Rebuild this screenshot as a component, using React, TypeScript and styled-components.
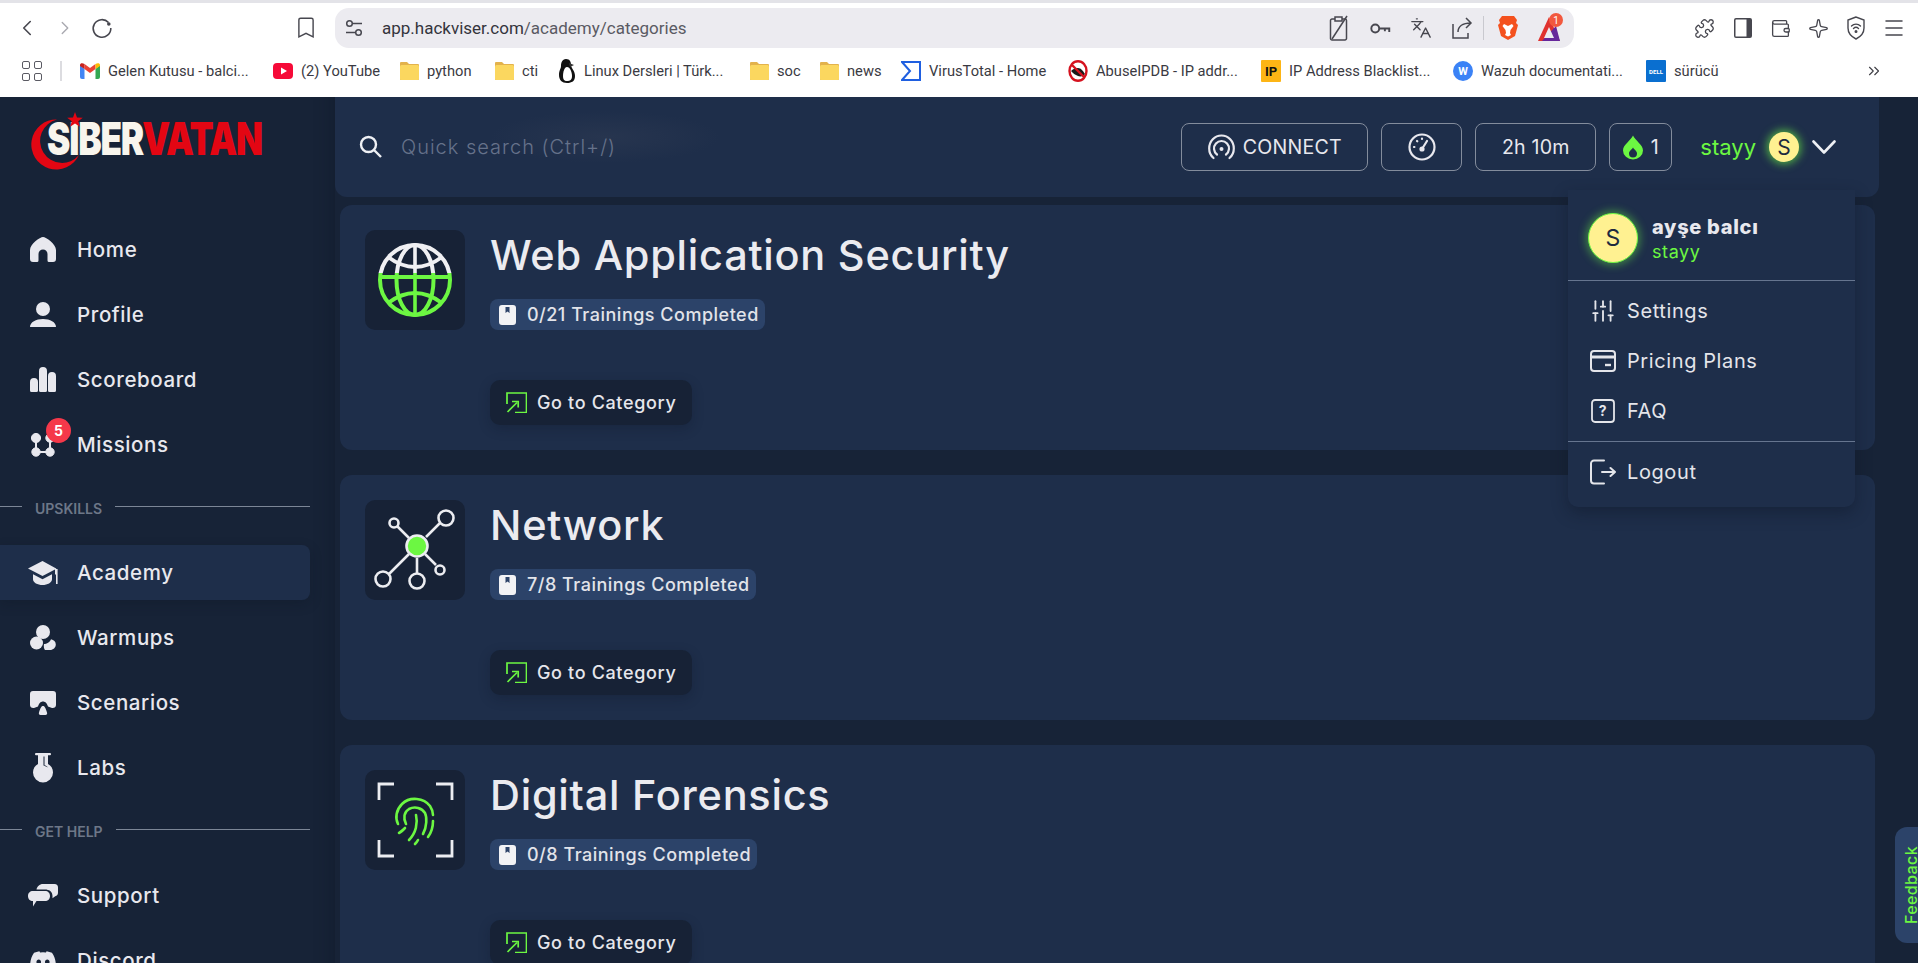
import React from "react";
import styled, { createGlobalStyle } from "styled-components";
import { ChevronLeft, ChevronRight, ChevronsRight, Languages, Menu, Puzzle, Sparkle, SlidersVertical, Wallet } from "lucide-react";
import { FaDiscord } from "react-icons/fa";

const GREEN = "#6cf742";
const UI_FONT = `"Inter", "Noto Sans", sans-serif`;
const CHROME_FONT = `"Roboto", "Noto Sans", sans-serif`;

const GlobalStyle = createGlobalStyle`
  html, body {
    margin: 0;
    height: 100%;
    overflow: hidden;
    background: #172337;
  }
  * { box-sizing: border-box; }
`;

const Page = styled.div`
  width: 1918px;
  height: 963px;
  position: relative;
  overflow: hidden;
  display: flex;
  flex-direction: column;
  font-family: ${UI_FONT};
`;

/* browser chrome */
const Chrome = styled.div`
  height: 97px;
  flex: none;
  background: #fff;
  border-top: 3px solid #e3e3e8;
  color: #3f3f46;
  font-family: ${CHROME_FONT};
`;

const Toolbar = styled.div`
  height: 50px;
  padding: 5px 13px 5px 0;
  display: flex;
  align-items: center;
`;

const ToolButton = styled.div<{ $w: number; $faded?: boolean }>`
  width: ${(p) => p.$w}px;
  flex: none;
  display: flex;
  justify-content: center;
  align-items: center;
  color: ${(p) => (p.$faded ? "#a9a9b0" : "#47474f")};
`;

const PageBookmark = styled(ToolButton)`
  margin: 0 14px 0 163px;
`;

const AddressBar = styled.div`
  width: 1239px;
  height: 40px;
  margin-right: 110px;
  flex: none;
  background: #ecebf0;
  border-radius: 14px;
  display: flex;
  align-items: center;
  padding-left: 10px;
  color: #47474f;
`;

const UrlText = styled.span`
  font-size: 17px;
  color: #34343c;
  margin-left: 19px;
  flex: 1;
`;

const UrlPath = styled.span`
  color: #5a5a63;
`;

const BarSeparator = styled.div`
  width: 1px;
  height: 24px;
  background: #c9c9cf;
  margin: 0 4px 0 1px;
`;

const Bookmarks = styled.div`
  height: 44px;
  display: flex;
  align-items: center;
  padding: 0 0 8px 22px;
`;

const AppsButton = styled.div`
  width: 20px;
  display: grid;
  grid-template-columns: 8px 8px;
  gap: 4px;
`;

const AppsCell = styled.div`
  width: 8px;
  height: 8px;
  border: 1.4px solid #5a5a63;
  border-radius: 2px;
`;

const BookmarkDivider = styled.div`
  width: 2px;
  height: 20px;
  background: #dcdce0;
  margin: 0 18px;
`;

const BookmarkItem = styled.div<{ $w: number }>`
  width: ${(p) => p.$w}px;
  flex: none;
  display: flex;
  align-items: center;
  gap: 8px;
  font-size: 14.7px;
  color: #3a3a42;
  white-space: nowrap;
`;

/* body */
const Body = styled.div`
  flex: 1;
  display: flex;
  min-height: 0;
`;

const Sidebar = styled.aside`
  width: 335px;
  flex: none;
  background: #172337;
  padding-right: 25px;
  box-shadow: inset -22px 0 20px -22px rgba(10, 16, 28, 0.35);
`;

const LogoBlock = styled.div`
  height: 125px;
  padding: 22px 0 0 30px;
  position: relative;
`;

const LogoText = styled.div`
  position: absolute;
  left: 47px;
  top: 15px;
  font-size: 45px;
  line-height: 54px;
  font-weight: 900;
  letter-spacing: -1.5px;
  white-space: nowrap;
  color: #f8f5ed;
  transform: scaleX(0.78);
  transform-origin: left center;
`;

const LogoRed = styled.span`
  color: #e30613;
`;

const LogoStar = styled.svg`
  position: absolute;
  left: 67px;
  top: 15px;
`;

const NavList = styled.nav`
  display: flex;
  flex-direction: column;
  gap: 10px;
`;

const NavItem = styled.div<{ $active?: boolean }>`
  height: 55px;
  display: flex;
  align-items: center;
  gap: 19px;
  padding-left: 28px;
  border-radius: 0 8px 8px 0;
  background: ${(p) => (p.$active ? "#1e2e4a" : "transparent")};
  box-shadow: ${(p) => (p.$active ? "0 4px 12px rgba(10,18,32,0.25)" : "none")};
  font-size: 20.5px;
  font-weight: 500;
  letter-spacing: 0.6px;
  color: #e8e8ee;
`;

const NavLabel = styled.span`
  margin-top: -1px;
`;

const NavIcon = styled.div`
  width: 30px;
  height: 30px;
  flex: none;
  display: flex;
  align-items: center;
  justify-content: center;
  position: relative;
  color: #e8e8ee;
`;

const CountBadge = styled.span`
  position: absolute;
  left: 18px;
  top: -12px;
  width: 25px;
  height: 25px;
  border-radius: 50%;
  background: #f5384a;
  color: #fff;
  font-size: 14px;
  font-weight: 700;
  letter-spacing: 0;
  display: flex;
  align-items: center;
  justify-content: center;
`;

const SectionLabel = styled.div`
  height: 53px;
  display: flex;
  align-items: center;
  gap: 13px;
  font-size: 14px;
  font-weight: 600;
  color: #6d7788;
`;

const SectionLine = styled.div<{ $short?: boolean }>`
  height: 1px;
  margin-top: -4px;
  background: #7c8696;
  ${(p) => (p.$short ? "width: 22px; flex: none;" : "flex: 1;")}
`;

const Main = styled.main`
  flex: 1;
  min-width: 0;
  padding-right: 39px;
`;

const Header = styled.header`
  height: 100px;
  display: flex;
  align-items: center;
  padding: 0 43px 0 22px;
  margin-bottom: 8px;
  border-radius: 0 0 12px 12px;
  background: radial-gradient(ellipse 115px 26px at 270px 40px, #27354f 0%, rgba(39, 53, 79, 0) 100%), #1e2e4a;
`;

const SearchBox = styled.div`
  flex: 1;
  display: flex;
  align-items: center;
  gap: 18px;
  padding-left: 2px;
  color: #eef0f4;
`;

const SearchHint = styled.span`
  font-size: 20px;
  font-weight: 300;
  letter-spacing: 1px;
  color: #66728a;
`;

const HeaderActions = styled.div`
  display: flex;
  align-items: center;
  gap: 13px;
`;

const OutlineButton = styled.div<{ $w: number }>`
  width: ${(p) => p.$w}px;
  height: 48px;
  display: flex;
  align-items: center;
  justify-content: center;
  gap: 8px;
  border: 1px solid #838c9c;
  border-radius: 8px;
  font-size: 19.6px;
  font-weight: 400;
  letter-spacing: 0.2px;
  color: #e8e8ee;
`;

const UserName = styled.span`
  margin-left: 15px;
  font-size: 22px;
  font-weight: 400;
  color: ${GREEN};
`;

const SmallAvatar = styled.div`
  width: 30px;
  height: 30px;
  border-radius: 50%;
  background: #fff191;
  box-shadow: 0 0 8px 2px rgba(108, 247, 66, 0.65);
  color: #1d2a3f;
  font-size: 21px;
  display: flex;
  align-items: center;
  justify-content: center;
`;

const CardList = styled.div`
  display: flex;
  flex-direction: column;
  gap: 25px;
  padding-left: 5px;
  margin-right: 4px;
`;

const Card = styled.section`
  height: 245px;
  flex: none;
  padding: 25px;
  display: flex;
  gap: 25px;
  border-radius: 12px;
  background: #1e2e4a;
`;

const IconBox = styled.div`
  width: 100px;
  height: 100px;
  flex: none;
  border-radius: 10px;
  background: #172236;
`;

const CardBody = styled.div`
  display: flex;
  flex-direction: column;
  align-items: flex-start;
`;

const CardTitle = styled.h2`
  margin: 0;
  height: 50px;
  font-size: 41.5px;
  line-height: 50px;
  font-weight: 500;
  letter-spacing: 0.75px;
  color: #ebebf0;
`;

const ProgressBadge = styled.div`
  height: 31px;
  margin-top: 19px;
  padding: 0 6px 0 9px;
  display: flex;
  align-items: center;
  gap: 11px;
  border-radius: 8px;
  background: #2c4369;
  font-size: 18px;
  font-weight: 500;
  letter-spacing: 0.5px;
  color: #e2e4ea;
`;

const CategoryButton = styled.div`
  height: 45px;
  width: 202px;
  margin-top: 50px;
  padding-left: 16px;
  display: flex;
  align-items: center;
  gap: 10px;
  border-radius: 10px;
  background: #172236;
  box-shadow: 0 4px 12px rgba(12, 20, 36, 0.25);
  font-size: 18px;
  font-weight: 500;
  letter-spacing: 0.65px;
  color: #e6e6ec;
`;

/* dropdown over the page */
const Dropdown = styled.div`
  position: absolute;
  left: 1568px;
  top: 190px;
  width: 287px;
  height: 317px;
  border-radius: 0 0 10px 10px;
  background: #1e2e4a;
  box-shadow: 0 6px 16px rgba(12, 20, 36, 0.4);
  color: #e8e8ee;
`;

const DropdownHead = styled.div`
  height: 91px;
  padding: 23px 0 0 20px;
  display: flex;
  gap: 14px;
  border-bottom: 1px solid #66758f;
`;

const BigAvatar = styled.div`
  width: 50px;
  height: 50px;
  flex: none;
  border-radius: 50%;
  background: #fff191;
  border: 1px solid ${GREEN};
  box-shadow: 0 0 9px 2px rgba(108, 247, 66, 0.45);
  color: #1d2a3f;
  font-size: 23px;
  display: flex;
  align-items: center;
  justify-content: center;
`;

const FullName = styled.div`
  font-size: 20px;
  line-height: 28px;
  font-weight: 800;
  letter-spacing: 0.7px;
  color: #e8e8ee;
`;

const Handle = styled.div`
  font-size: 18px;
  line-height: 22px;
  letter-spacing: 0.6px;
  color: ${GREEN};
`;

const DropdownGroup = styled.div<{ $last?: boolean }>`
  padding: 5px 0;
  ${(p) => (p.$last ? "" : "border-bottom: 1px solid #66758f;")}
`;

const DropdownRow = styled.div`
  height: 50px;
  padding-left: 22px;
  display: flex;
  align-items: center;
  gap: 11px;
  font-size: 20px;
  font-weight: 400;
  letter-spacing: 0.6px;
  color: #e4e5ea;
`;

const RowIcon = styled.div`
  width: 26px;
  flex: none;
  display: flex;
  align-items: center;
  justify-content: center;
`;

const FeedbackTab = styled.div`
  position: absolute;
  left: 1895px;
  top: 827px;
  width: 23px;
  height: 116px;
  padding-left: 8px;
  border-radius: 12px 0 0 12px;
  background: #2c4369;
  color: ${GREEN};
  font-size: 16px;
  line-height: 14px;
  font-weight: 500;
  letter-spacing: 0.4px;
  writing-mode: vertical-rl;
  display: flex;
  align-items: center;
  justify-content: center;
`;

const FeedbackLabel = styled.span`
  transform: rotate(180deg);
`;

/* drawn icons */
const HomeIcon = () => (
  <svg width="26" height="25" viewBox="0 0 26 25" fill="currentColor">
    <path d="M13 0C16 0 26 7 26 13V22a3 3 0 0 1-3 3H19a1.5 1.5 0 0 1-1.5-1.5V17a4.5 4.5 0 0 0-9 0V23.5A1.5 1.5 0 0 1 7 25H3a3 3 0 0 1-3-3V13C0 7 10 0 13 0Z" />
  </svg>
);

const ProfileIcon = () => (
  <svg width="26" height="25" viewBox="0 0 26 25" fill="currentColor">
    <circle cx="13" cy="7" r="7" />
    <path d="M0 25c0-5 6-8 13-8s13 3 13 8Z" />
  </svg>
);

const ScoreIcon = () => (
  <svg width="26" height="25" viewBox="0 0 26 25" fill="currentColor">
    <path d="M0 15a4 4 0 0 1 8 0v8.5a1.5 1.5 0 0 1-1.5 1.5h-5A1.5 1.5 0 0 1 0 23.5Z" />
    <path d="M9 4a4 4 0 0 1 8 0v19.5a1.5 1.5 0 0 1-1.5 1.5h-5A1.5 1.5 0 0 1 9 23.5Z" />
    <path d="M18 9a4 4 0 0 1 8 0v14.5a1.5 1.5 0 0 1-1.5 1.5h-5a1.5 1.5 0 0 1-1.5-1.5Z" />
  </svg>
);

const MissionIcon = () => (
  <svg width="24" height="24" viewBox="0 0 24 24" fill="currentColor" stroke="currentColor">
    <circle cx="5" cy="5" r="4.6" />
    <circle cx="5" cy="19" r="4.2" />
    <circle cx="19" cy="19" r="4.2" />
    <circle cx="19" cy="5" r="4.2" />
    <path d="M5 5v14h14V5" fill="none" strokeWidth="2" />
  </svg>
);

const CapIcon = () => (
  <svg width="30" height="24" viewBox="0 0 30 24" fill="currentColor">
    <path d="M14.5 0 0 7.5l14.5 7.5L27 8.5v5h1.2V7.6Z" />
    <path d="M5 13.2v5c0 3.4 4.6 5.8 9.5 5.8S24 21.6 24 18.2v-5l-9.5 5Z" />
    <rect x="28" y="8" width="1.6" height="15" />
  </svg>
);

const WarmupIcon = () => (
  <svg width="26" height="25" viewBox="0 0 26 25" fill="currentColor">
    <circle cx="13" cy="7" r="7" />
    <circle cx="6.5" cy="18" r="6.5" />
    <path d="M15 25c-1-1-1.5-3.5-1-6 2.6 0 6-1.8 7-4.8 2.8.8 4.8 2.4 4.8 5.3 0 3-2.6 5.5-5.8 5.5Z" />
  </svg>
);

const ScenarioIcon = () => (
  <svg width="26" height="24" viewBox="0 0 26 24" fill="currentColor">
    <path d="M3 0h20a3 3 0 0 1 3 3v11c0 2-2 3.5-4 3l-4-1.400C16.500 11 14.500 10.500 13 10.500S9.500 11 8 15.600L4 17c-2 .5-4-1-4-3V3a3 3 0 0 1 3-3Z" />
    <path d="M13 15c1.500 0 2.500 1.500 4 6.500.5 1.500-.2 2.500-1.500 2.500h-5c-1.300 0-2-1-1.500-2.500C10.500 16.500 11.500 15 13 15Z" />
  </svg>
);

const FlaskIcon = () => (
  <svg width="20" height="30" viewBox="0 0 20 30" fill="currentColor">
    <rect x="2" y="0" width="16" height="2.200" rx="1" />
    <path
      d="M5 2h10v9c3 1.500 5 4.500 5 8.500a10 10 0 0 1-20 0c0-4 2-7 5-8.500Zm6.500 1.500V12l1.800.9 2 1.500-2.500-.9-1.300-.8-1-.2V3.500Z"
      fillRule="evenodd"
    />
  </svg>
);

const ChatIcon = () => (
  <svg width="30" height="23" viewBox="0 0 30 23" fill="currentColor">
    <path d="M15 0h11.500A3.500 3.500 0 0 1 30 3.500v5c0 2-1 3.500-2.800 3.700l-2.700 2V12C24.500 7.500 21 5.500 17 5.500H8.500C9 2.500 11.500 0 15 0Z" />
    <path d="M5 7h12c3 0 5 2 5 5s-2 5-5 5H8.500l-3.500 5.500V17C2 17 0 15 0 12s2-5 5-5Z" />
  </svg>
);

const BookIcon = () => (
  <svg width="17" height="20" viewBox="0 0 17 20" fill="#f1f2f5">
    <path d="M3 0h11a3 3 0 0 1 3 3v14a3 3 0 0 1-3 3H3a3 3 0 0 1-3-3V3a3 3 0 0 1 3-3Zm3.500 2v6l2-1.500 2 1.500V2Z" fillRule="evenodd" />
  </svg>
);

const OpenIcon = () => (
  <svg width="21" height="21" viewBox="0 0 21 21" fill="none" stroke={GREEN} strokeWidth="1.700">
    <path d="M1 12V1h19.500v19.500H9" />
    <path d="M1.500 20 11 10.500" />
    <path d="M6 9.500h6.200v6" />
  </svg>
);

const GlobeIcon = () => (
  <svg width="100" height="100" viewBox="0 0 100 100" fill="none">
    <defs>
      <linearGradient id="globeSplit" gradientUnits="userSpaceOnUse" x1="0" y1="0" x2="0" y2="100">
        <stop offset="43%" stopColor="#f0f0f3" />
        <stop offset="43%" stopColor={GREEN} />
      </linearGradient>
    </defs>
    <g stroke="url(#globeSplit)" strokeWidth="4">
      <circle cx="50" cy="50" r="35" />
      <ellipse cx="50" cy="50" rx="18.500" ry="35" />
      <path d="M15 47h70" />
      <path d="M23 27Q50 47 77 27" />
      <path d="M23 73Q50 53 77 73" />
    </g>
    <rect x="48.200" y="15" width="3.600" height="28" fill="#f0f0f3" />
    <rect x="48.200" y="43" width="3.600" height="42" fill={GREEN} />
  </svg>
);

const NetworkIcon = () => (
  <svg width="100" height="100" viewBox="0 0 100 100" fill="none" stroke="#ecedf1" strokeWidth="2.600">
    <path d="M44 38 32 26M61 37 75 23M44 54 24 74M52 58v15M60 54l11 11" />
    <circle cx="29" cy="23" r="4.500" />
    <circle cx="81" cy="18" r="7.500" />
    <circle cx="18" cy="79" r="7.500" />
    <circle cx="52" cy="81" r="7.500" />
    <circle cx="75" cy="70" r="4.500" />
    <circle cx="52" cy="46" r="10.500" fill={GREEN} />
  </svg>
);

const FingerprintIcon = () => (
  <svg width="100" height="100" viewBox="0 0 100 100" fill="none" strokeLinecap="round">
    <path d="M14 30V14h15M71 14h16v16M14 70v16h15M71 86h16V70" stroke="#ecedf1" strokeWidth="2.800" strokeLinecap="butt" />
    <g stroke={GREEN} strokeWidth="2.600">
      <path d="M33 54c-3-6-2-14 4-20 8-8 22-6 28 2 2 3 3 6 3 9" />
      <path d="M41 54c-3-6-2-12 3-15 6-3 13-1 16 4 2 4 2 14-2 21" />
      <path d="M51 45c2 8 0 18-7 25" />
      <path d="M68 51c0 7-2 12-5 16" />
      <path d="M34 63c2-1 4-3 6-5" />
      <path d="M53 70c-1 2-2 3-3 4" />
    </g>
  </svg>
);

const ConnectIcon = () => (
  <svg width="27" height="26" viewBox="0 0 27 26" fill="none" stroke="#e8e8ee" strokeWidth="2.200" strokeLinecap="round">
    <path d="M5.500 24C2.800 21.800 1.200 18 1.200 14.500a12.300 13 0 0 1 24.600 0c0 3.500-1.600 7.300-4.300 9.500" />
    <path d="M9 20.500a7.500 7.500 0 1 1 9 0" />
    <circle cx="13.500" cy="15" r="2" fill="#e8e8ee" stroke="none" />
  </svg>
);

const GaugeIcon = () => (
  <svg width="28" height="28" viewBox="0 0 28 28" fill="none" stroke="#e8e8ee" strokeWidth="2.200" strokeLinecap="round">
    <circle cx="14" cy="14" r="12.500" />
    <path d="M14 16 19 8" />
    <circle cx="14" cy="16" r="1.500" fill="#e8e8ee" />
    <path d="M6 14h.4M14 5.500v.4M9 8l.3.3" />
  </svg>
);

const FlameIcon = () => (
  <svg width="20" height="25" viewBox="0 0 20 24" fill={GREEN}>
    <path d="M10 0c2 5 10 9 10 15a10 9 0 0 1-20 0C0 9 8 5 10 0Zm0 12c-1 2-4 3.500-4 6a4 4 0 0 0 8 0c0-2.500-3-4-4-6Z" fillRule="evenodd" />
  </svg>
);

const HeaderChevron = () => (
  <svg width="24" height="14" viewBox="0 0 24 14" fill="none" stroke="#eef0f4" strokeWidth="2.600" strokeLinecap="round" strokeLinejoin="round">
    <path d="M1.500 1.500 12 12.500 22.500 1.500" />
  </svg>
);

const CardIcon = () => (
  <svg width="26" height="22" viewBox="0 0 26 22" fill="none" stroke="#e4e5ea" strokeWidth="2">
    <rect x="1" y="1" width="24" height="20" rx="3" />
    <path d="M1 7h24" strokeWidth="3" />
    <path d="M15 15h6" strokeWidth="2.400" />
  </svg>
);

const FaqIcon = () => (
  <svg width="24" height="24" viewBox="0 0 24 24" fill="none" stroke="#e4e5ea" strokeWidth="1.800">
    <rect x="1" y="1" width="22" height="22" rx="3" />
    <text x="12" y="17" textAnchor="middle" fontSize="14" fontWeight="700" fontFamily="Inter, sans-serif" fill="#e4e5ea" stroke="none">?</text>
  </svg>
);

const LogoutIcon = () => (
  <svg width="26" height="26" viewBox="0 0 26 26" fill="none" stroke="#e4e5ea" strokeWidth="2" strokeLinecap="round" strokeLinejoin="round">
    <path d="M14 1.500H4a3 3 0 0 0-3 3v17a3 3 0 0 0 3 3h10" />
    <path d="M12 13h13M20.500 9l4.500 4-4.500 4" />
  </svg>
);

const LogoCrescent = () => (
  <svg width="50" height="51" viewBox="0 0 50 51">
    <path d="M27 .5A25 25 0 1 0 49 36A22 22 0 1 1 27 .5Z" fill="#e30613" />
  </svg>
);

const TuneIcon = () => (
  <svg width="18" height="18" viewBox="0 0 18 18" fill="none" stroke="#47474f" strokeWidth="1.500">
    <circle cx="4.500" cy="4.500" r="2.800" />
    <path d="M7.500 4.500H17M1 13.500h9.500" />
    <circle cx="13.500" cy="13.500" r="2.800" />
  </svg>
);

const ReloadIcon = () => (
  <svg width="22" height="22" viewBox="0 0 22 22" fill="none" stroke="#47474f" strokeWidth="1.600">
    <path d="M17.500 5.500A8.800 8.800 0 1 0 19.800 11" />
    <circle cx="17.800" cy="7" r="1.800" fill="#47474f" stroke="none" />
  </svg>
);

const OutlinedBookmark = () => (
  <svg width="16" height="22" viewBox="0 0 18 24" fill="none" stroke="#47474f" strokeWidth="1.600">
    <path d="M3 1h12a2 2 0 0 1 2 2v19l-8-4-8 4V3a2 2 0 0 1 2-2Z" />
  </svg>
);

const NoScriptIcon = () => (
  <svg width="22" height="26" viewBox="0 0 22 26" fill="none" stroke="#47474f" strokeWidth="1.500">
    <path d="M7 4H4a1.500 1.500 0 0 0-1.500 1.500v18A1.500 1.500 0 0 0 4 25h13a1.500 1.500 0 0 0 1.500-1.500V5.500A1.500 1.500 0 0 0 17 4h-3" />
    <path d="M7 2h7v4H7Z" />
    <path d="M19 1 4 24" />
  </svg>
);

const KeyIcon = () => (
  <svg width="21" height="15" viewBox="0 0 24 16" fill="none" stroke="#47474f" strokeWidth="2.200">
    <circle cx="6" cy="8" r="4.500" />
    <path d="M10.500 8H22v4M17 8v3" />
  </svg>
);

const ShareIcon = () => (
  <svg width="24" height="24" viewBox="0 0 24 24" fill="none" stroke="#47474f" strokeWidth="1.500">
    <path d="M3 8v14h15v-5" />
    <path d="M8 16c0-5 4-9 13-9M16 2l5 5-5 5" />
  </svg>
);

const SidePanelIcon = () => (
  <svg width="20" height="22" viewBox="0 0 20 22" fill="#47474f">
    <path d="M3 1h14a2 2 0 0 1 2 2v16a2 2 0 0 1-2 2H3a2 2 0 0 1-2-2V3a2 2 0 0 1 2-2Zm0 1.500a.5.5 0 0 0-.5.500v16a.5.5 0 0 0 .5.500h10.500v-17Z" fillRule="evenodd" />
  </svg>
);

const ShieldWifiIcon = () => (
  <svg width="20" height="24" viewBox="0 0 20 24" fill="none" stroke="#47474f" strokeWidth="1.400" strokeLinecap="round">
    <path d="M10 1 2 4v8c0 5 4 9 8 11 4-2 8-6 8-11V4Z" />
    <path d="M5.500 10c2.500-2.500 6.500-2.500 9 0M7.500 12.500c1.400-1.300 3.600-1.300 5 0" />
    <circle cx="10" cy="15.500" r=".8" fill="#47474f" />
  </svg>
);

const BraveIcon = () => (
  <svg width="20" height="24" viewBox="0 0 20 24">
    <path d="M4 0h12l3 4-1 3 2 2-3 11-7 4-7-4L0 9l2-2-1-3Z" fill="#f4511e" />
    <path d="M6 8l4 2 4-2 1.500 2-3 4-.5 3 1 2-3 1.500L7 19l1-2-.5-3-3-4Z" fill="#fff" />
  </svg>
);

const TriangleIcon = () => (
  <svg width="26" height="30" viewBox="0 0 26 30">
    <path d="M11 4 22 28H0Z" fill="#e0322f" />
    <path d="M4 28 18 13l4 15Z" fill="#66279b" />
    <path d="M11 14 16 25H6Z" fill="#ecebf0" />
    <circle cx="18" cy="7" r="7" fill="#f2583e" />
    <text x="18" y="10.500" textAnchor="middle" fontSize="10" fill="#fff" fontFamily="Roboto, sans-serif">1</text>
  </svg>
);

const FolderIcon = () => (
  <svg width="19" height="18" viewBox="0 0 19 18">
    <path d="M1 0h6l2 2h9a1 1 0 0 1 1 1v14a1 1 0 0 1-1 1H1a1 1 0 0 1-1-1V1a1 1 0 0 1 1-1Z" fill="#e3b24c" />
    <rect y="3" width="19" height="15" rx="1.500" fill="#fbd75f" />
  </svg>
);

const GmailIcon = () => (
  <svg width="20" height="16" viewBox="0 0 20 16">
    <path d="M0 2v12a2 2 0 0 0 2 2h2.500V6Z" fill="#4285f4" />
    <path d="M20 2v12a2 2 0 0 1-2 2h-2.500V6Z" fill="#34a853" />
    <path d="M4.500 6 10 10l5.500-4V1L10 5 4.500 1Z" fill="#ea4335" />
    <path d="M0 2c0-2 2.500-2.500 4.500-1v5L0 3Z" fill="#c5221f" />
    <path d="M20 2c0-2-2.500-2.500-4.500-1v5L20 3Z" fill="#fbbc04" />
  </svg>
);

const YoutubeIcon = () => (
  <svg width="20" height="16" viewBox="0 0 20 16">
    <rect width="20" height="16" rx="4" fill="#f60a38" />
    <path d="M8 4.500 14 8l-6 3.500Z" fill="#fff" />
  </svg>
);

const PenguinIcon = () => (
  <svg width="18" height="24" viewBox="0 0 18 24">
    <path d="M8 0c4 0 5 3 5 6s4 6 4 11-3 7-8 7-8-3-8-8 2-6 2-9 1-7 5-7Z" fill="#111" />
    <path d="M9 8c3 0 5 5 5 9s-2 5-5 5-4-2-4-5 1-9 4-9Z" fill="#fff" />
    <path d="M11 4l5 2-4 2Z" fill="#333" />
  </svg>
);

const VirusTotalIcon = () => (
  <svg width="20" height="20" viewBox="0 0 20 20" fill="none" stroke="#1f5fe0" strokeWidth="2">
    <path d="M1 1h18v18H1l8-9Z" />
  </svg>
);

const AbuseIcon = () => (
  <svg width="20" height="22" viewBox="0 0 20 22">
    <ellipse cx="10" cy="11" rx="8.500" ry="9.800" fill="#fff" stroke="#d5121f" strokeWidth="2.400" />
    <path d="M3 11c2-2 4-3 7-3s5 3 7 6c-2 2-4 3-7 2s-5-3-7-5Z" fill="#1a1a1a" />
    <path d="M4 5l12 12" stroke="#d5121f" strokeWidth="2.400" />
  </svg>
);

const LetterTile = styled.span<{ $bg: string; $fg: string; $size: number; $round?: boolean }>`
  width: 20px;
  height: ${(p) => (p.$round ? 20 : 22)}px;
  flex: none;
  display: flex;
  align-items: center;
  justify-content: center;
  background: ${(p) => p.$bg};
  color: ${(p) => p.$fg};
  font-size: ${(p) => p.$size}px;
  font-weight: 700;
  border-radius: ${(p) => (p.$round ? "50%" : "1px")};
`;

const cards = [
  { title: "Web Application Security", progress: "0/21", icon: <GlobeIcon /> },
  { title: "Network", progress: "7/8", icon: <NetworkIcon /> },
  { title: "Digital Forensics", progress: "0/8", icon: <FingerprintIcon /> },
];

const bookmarks = [
  { label: "Gelen Kutusu - balci...", w: 193, icon: <GmailIcon /> },
  { label: "(2) YouTube", w: 127, icon: <YoutubeIcon /> },
  { label: "python", w: 95, icon: <FolderIcon /> },
  { label: "cti", w: 63, icon: <FolderIcon /> },
  { label: "Linux Dersleri | Türk...", w: 192, icon: <PenguinIcon /> },
  { label: "soc", w: 70, icon: <FolderIcon /> },
  { label: "news", w: 81, icon: <FolderIcon /> },
  { label: "VirusTotal - Home", w: 167, icon: <VirusTotalIcon /> },
  { label: "AbuseIPDB - IP addr...", w: 193, icon: <AbuseIcon /> },
  { label: "IP Address Blacklist...", w: 192, icon: <LetterTile $bg="#fdb515" $fg="#111" $size={13}>IP</LetterTile> },
  { label: "Wazuh documentati...", w: 193, icon: <LetterTile $bg="#3b82f6" $fg="#fff" $size={11} $round>W</LetterTile> },
  { label: "sürücü", w: 219, icon: <LetterTile $bg="#0a6fd0" $fg="#fff" $size={6}>DELL</LetterTile> },
];

const App = () => (
  <Page>
    <GlobalStyle />
    <Chrome>
      <Toolbar>
        <ToolButton $w={54}><ChevronLeft size={26} strokeWidth={1.5} /></ToolButton>
        <ToolButton $w={22} $faded><ChevronRight size={26} strokeWidth={1.5} /></ToolButton>
        <ToolButton $w={52}><ReloadIcon /></ToolButton>
        <PageBookmark $w={30}><OutlinedBookmark /></PageBookmark>
        <AddressBar>
          <TuneIcon />
          <UrlText>
            app.hackviser.com<UrlPath>/academy/categories</UrlPath>
          </UrlText>
          <ToolButton $w={42}><NoScriptIcon /></ToolButton>
          <ToolButton $w={40}><KeyIcon /></ToolButton>
          <ToolButton $w={42}><Languages size={22} strokeWidth={1.5} /></ToolButton>
          <ToolButton $w={40}><ShareIcon /></ToolButton>
          <BarSeparator />
          <ToolButton $w={40}><BraveIcon /></ToolButton>
          <ToolButton $w={46}><TriangleIcon /></ToolButton>
        </AddressBar>
        <ToolButton $w={40}><Puzzle size={21} strokeWidth={1.5} /></ToolButton>
        <ToolButton $w={38}><SidePanelIcon /></ToolButton>
        <ToolButton $w={37}><Wallet size={21} strokeWidth={1.5} /></ToolButton>
        <ToolButton $w={38}><Sparkle size={21} strokeWidth={1.5} /></ToolButton>
        <ToolButton $w={38}><ShieldWifiIcon /></ToolButton>
        <ToolButton $w={38}><Menu size={24} strokeWidth={1.5} /></ToolButton>
      </Toolbar>
      <Bookmarks>
        <AppsButton>
          <AppsCell /><AppsCell /><AppsCell /><AppsCell />
        </AppsButton>
        <BookmarkDivider />
        {bookmarks.map((b) => (
          <BookmarkItem key={b.label} $w={b.w}>
            {b.icon}
            {b.label}
          </BookmarkItem>
        ))}
        <ChevronsRight size={18} strokeWidth={1.5} />
      </Bookmarks>
    </Chrome>
    <Body>
      <Sidebar>
        <LogoBlock>
          <LogoCrescent />
          <LogoText>
            SIBER<LogoRed>VATAN</LogoRed>
          </LogoText>
          <LogoStar width="16" height="16" viewBox="0 0 16 16">
            <path d="M8 0l2 5.500 5.800.2-4.600 3.500 1.700 5.600L8 11.500l-4.900 3.300 1.700-5.600L.2 5.700 6 5.500Z" fill="#e30613" />
          </LogoStar>
        </LogoBlock>
        <NavList>
          <NavItem><NavIcon><HomeIcon /></NavIcon><NavLabel>Home</NavLabel></NavItem>
          <NavItem><NavIcon><ProfileIcon /></NavIcon><NavLabel>Profile</NavLabel></NavItem>
          <NavItem><NavIcon><ScoreIcon /></NavIcon><NavLabel>Scoreboard</NavLabel></NavItem>
          <NavItem>
            <NavIcon><MissionIcon /><CountBadge>5</CountBadge></NavIcon>
            <NavLabel>Missions</NavLabel>
          </NavItem>
          <SectionLabel><SectionLine $short />UPSKILLS<SectionLine /></SectionLabel>
          <NavItem $active><NavIcon><CapIcon /></NavIcon><NavLabel>Academy</NavLabel></NavItem>
          <NavItem><NavIcon><WarmupIcon /></NavIcon><NavLabel>Warmups</NavLabel></NavItem>
          <NavItem><NavIcon><ScenarioIcon /></NavIcon><NavLabel>Scenarios</NavLabel></NavItem>
          <NavItem><NavIcon><FlaskIcon /></NavIcon><NavLabel>Labs</NavLabel></NavItem>
          <SectionLabel><SectionLine $short />GET HELP<SectionLine /></SectionLabel>
          <NavItem><NavIcon><ChatIcon /></NavIcon><NavLabel>Support</NavLabel></NavItem>
          <NavItem><NavIcon><FaDiscord size={28} /></NavIcon><NavLabel>Discord</NavLabel></NavItem>
        </NavList>
      </Sidebar>
      <Main>
        <Header>
          <SearchBox>
            <svg width="24" height="24" viewBox="0 0 24 24" fill="none" stroke="#eef0f4" strokeWidth="2.400">
              <circle cx="9.500" cy="9.500" r="7.500" />
              <path d="M15 15l7 7" />
            </svg>
            <SearchHint>Quick search (Ctrl+/)</SearchHint>
          </SearchBox>
          <HeaderActions>
            <OutlineButton $w={187}><ConnectIcon />CONNECT</OutlineButton>
            <OutlineButton $w={81}><GaugeIcon /></OutlineButton>
            <OutlineButton $w={121}>2h 10m</OutlineButton>
            <OutlineButton $w={63}><FlameIcon />1</OutlineButton>
            <UserName>stayy</UserName>
            <SmallAvatar>S</SmallAvatar>
            <HeaderChevron />
          </HeaderActions>
        </Header>
        <CardList>
          {cards.map((c) => (
            <Card key={c.title}>
              <IconBox>{c.icon}</IconBox>
              <CardBody>
                <CardTitle>{c.title}</CardTitle>
                <ProgressBadge><BookIcon />{c.progress} Trainings Completed</ProgressBadge>
                <CategoryButton><OpenIcon />Go to Category</CategoryButton>
              </CardBody>
            </Card>
          ))}
        </CardList>
      </Main>
    </Body>
    <Dropdown>
      <DropdownHead>
        <BigAvatar>S</BigAvatar>
        <div>
          <FullName>ayşe balcı</FullName>
          <Handle>stayy</Handle>
        </div>
      </DropdownHead>
      <DropdownGroup>
        <DropdownRow><RowIcon><SlidersVertical size={28} strokeWidth={1.7} /></RowIcon>Settings</DropdownRow>
        <DropdownRow><RowIcon><CardIcon /></RowIcon>Pricing Plans</DropdownRow>
        <DropdownRow><RowIcon><FaqIcon /></RowIcon>FAQ</DropdownRow>
      </DropdownGroup>
      <DropdownGroup $last>
        <DropdownRow><RowIcon><LogoutIcon /></RowIcon>Logout</DropdownRow>
      </DropdownGroup>
    </Dropdown>
    <FeedbackTab><FeedbackLabel>Feedback</FeedbackLabel></FeedbackTab>
  </Page>
);

export default App;
